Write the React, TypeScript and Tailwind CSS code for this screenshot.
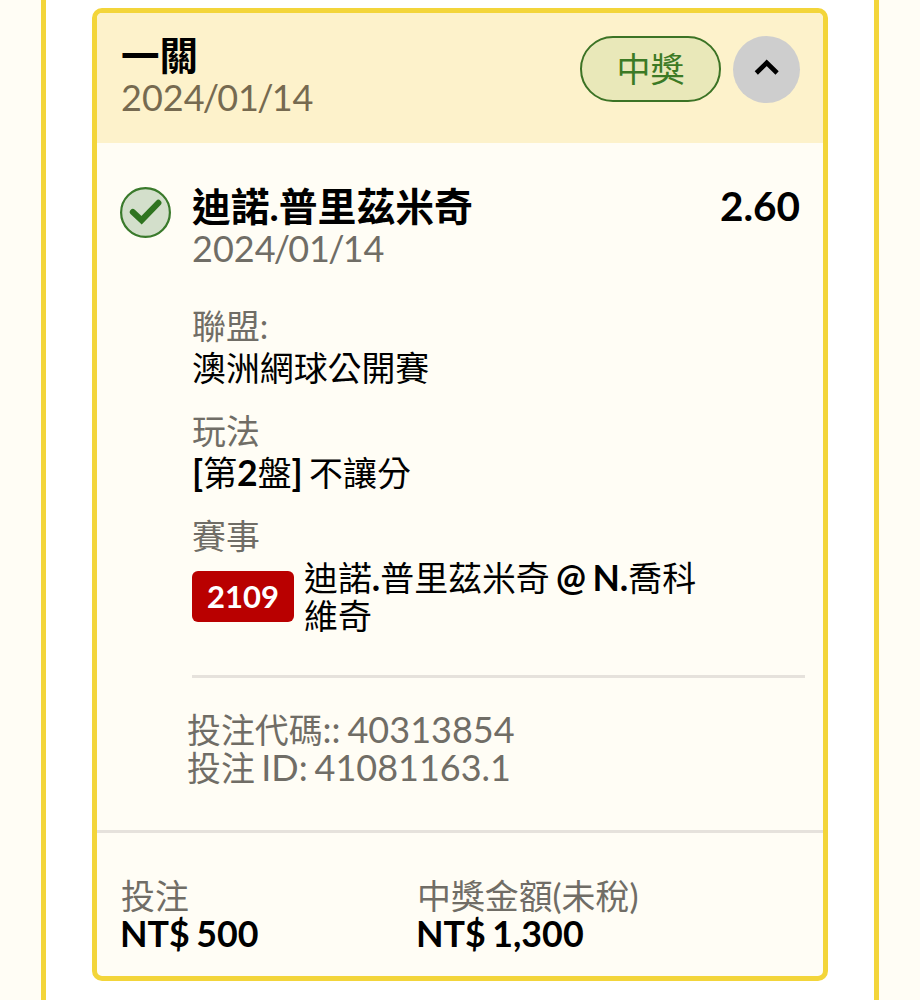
import React from "react";

const details = [
  { label: "聯盟:", value: <>澳洲網球公開賽</> },
  {
    label: "玩法",
    value: (
      <>
        <Latin bold>[</Latin>第<Latin bold>2</Latin>盤<Latin bold>] </Latin>不讓分
      </>
    ),
  },
];

const totals = [
  { label: "投注", amount: "NT$ 500", width: "w-[296px]" },
  { label: "中獎金額(未稅)", amount: "NT$ 1,300", width: "w-[300px]" },
];

// Latin runs are set a little larger than the Chinese around them
function Latin({ children, bold }: { children: React.ReactNode; bold?: boolean }) {
  return (
    <span className={bold ? "text-[35.6px] leading-none font-bold" : "text-[36px] leading-none"}>
      {children}
    </span>
  );
}

// Dates have tight slashes
function DateText({ value }: { value: string }) {
  return (
    <>
      {value.split("/").map((part, i) => (
        <React.Fragment key={i}>
          {i > 0 && <span className="-mx-[1.8px]">/</span>}
          {part}
        </React.Fragment>
      ))}
    </>
  );
}

function CheckIcon() {
  return (
    <svg className="mt-[44px] h-[51px] w-[51px] shrink-0" viewBox="0 0 51 51" fill="none">
      <circle cx="25.5" cy="25.5" r="24.4" fill="#d3dfcb" stroke="#3a7a2c" strokeWidth="2.2" />
      <path d="M12.8 25L21.6 33.2L38.4 15.8" stroke="#2f7420" strokeWidth="6" strokeLinecap="round" />
    </svg>
  );
}

function Header() {
  return (
    <header className="flex h-[130px] justify-between bg-[#fdf2cb] pr-[23px] pl-6">
      <div className="pt-[21px]">
        <h1 className="h-[42px] text-[38.5px] leading-[43px] font-bold text-black">一關</h1>
        <p className="h-[43px] text-[36px] leading-[43px] text-[#766a50]">
          <DateText value="2024/01/14" />
        </p>
      </div>
      <div className="flex gap-3 pt-[23px]">
        <span className="flex h-[66px] w-[141px] items-center justify-center rounded-full border-2 border-[#3c7325] bg-[#e9e8b9] text-[34px] leading-none text-[#3c7a25]">
          中獎
        </span>
        <button className="h-[67px] w-[67px] rounded-full bg-[#cecece]">
          <svg viewBox="0 0 67 67" fill="none">
            <path d="M23.3 37L33.7 26.8L44.1 37" stroke="#000" strokeWidth="4.6" />
          </svg>
        </button>
      </div>
    </header>
  );
}

export default function App() {
  return (
    <div className="flex h-[1000px] w-[920px] overflow-hidden bg-[#fffdf5] pl-[41px] font-['Lato','Noto_Sans_CJK_TC',sans-serif] text-[33.9px] [word-spacing:-2.3px]">
      <div className="h-full w-[838px] border-x-[5px] border-[#f3d53a] bg-white pt-2 pl-[46px]">
        <section className="h-[973px] w-[736px] overflow-hidden rounded-[10px] border-[5px] border-[#f3d53a] bg-[#fffdf5]">
          <Header />

          <div className="flex h-[687px] pl-[23px]">
            <CheckIcon />
            <div className="ml-[21px] w-[613px] pt-[41px]">
              <div className="flex h-[43px] justify-between leading-[43px] font-bold text-black">
                <h2 className="pt-px text-[38.8px]">迪諾.普里茲米奇</h2>
                <span className="mr-[5px] text-[40.5px]">2.60</span>
              </div>
              <p className="h-[43px] text-[36px] leading-[43px] text-[#706d66]">
                <DateText value="2024/01/14" />
              </p>

              <div className="mt-[35px] flex flex-col gap-[21px] leading-[42px]">
                {details.map((item) => (
                  <div key={item.label}>
                    <p className="h-[42px] text-[#706d66]">{item.label}</p>
                    <p className="h-[42px] text-black">{item.value}</p>
                  </div>
                ))}
                <div>
                  <p className="h-[42px] text-[#706d66]">賽事</p>
                  <div className="mt-[2px] flex h-[76px] items-center">
                    <span className="-mt-[2px] flex h-[51px] w-[102px] items-center justify-center rounded-md bg-[#b90000] text-[31px] leading-none font-bold text-white">
                      2109
                    </span>
                    <p className="ml-[10px] w-[400px] leading-[38px] text-black">
                      迪諾<Latin bold>.</Latin>普里茲米奇 <Latin bold>@ N.</Latin>喬科
                      <br />
                      維奇
                    </p>
                  </div>
                </div>
              </div>

              <hr className="mt-[40px] border-t-[3px] border-[#e6e2dc]" />

              <div className="mt-[33px] -ml-[5px] leading-[38px] text-[#706d66]">
                <p className="h-[38px]">
                  投注代碼<Latin>:: 40313854</Latin>
                </p>
                <p className="h-[38px]">
                  投注 <Latin>ID: 41081163.1</Latin>
                </p>
              </div>
            </div>
          </div>

          <footer className="flex border-t-[3px] border-[#e6e2dc] pt-[44px] pl-6 leading-[38px]">
            {totals.map((item) => (
              <div key={item.label} className={item.width}>
                <p className="h-[38px] text-[#706d66]">{item.label}</p>
                <p className="-ml-px h-[38px] text-[35.8px] font-bold text-black">{item.amount}</p>
              </div>
            ))}
          </footer>
        </section>
      </div>
    </div>
  );
}
